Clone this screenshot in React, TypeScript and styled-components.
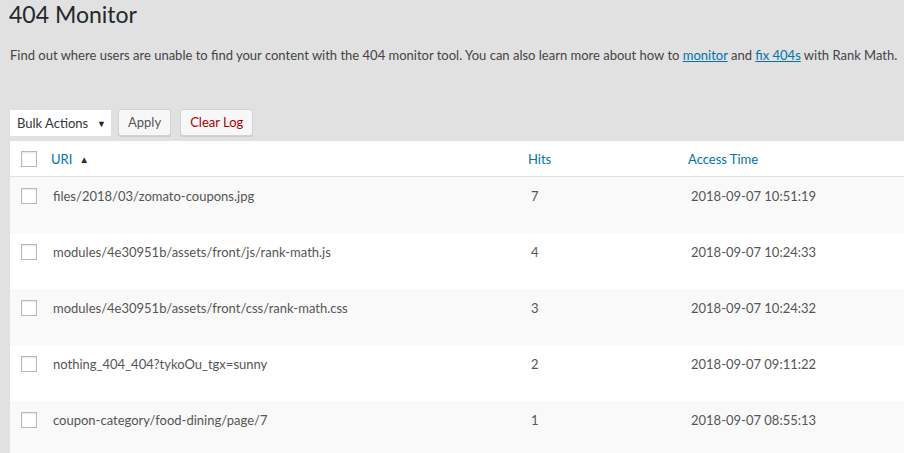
import React from "react";
import styled, { createGlobalStyle } from "styled-components";

const GlobalStyle = createGlobalStyle`
  html, body {
    margin: 0;
    padding: 0;
    background: #e1e1e1;
    font-family: Lato, "Open Sans", "Liberation Sans", sans-serif;
    color: #444;
    overflow: hidden;
  }
`;

const Page = styled.div`
  width: 904px;
  height: 453px;
  padding-left: 10px;
  box-sizing: border-box;
`;

const Title = styled.h1`
  margin: 0;
  padding: 0;
  font-size: 23px;
  font-weight: 400;
  line-height: 29px;
  color: #23282d;
  margin-left: -1px;
`;

const Description = styled.p`
  margin: 16px 0 0 0;
  font-size: 13px;
  line-height: 20px;
  color: #444;
  white-space: nowrap;
`;

const Link = styled.a`
  color: #0073aa;
  text-decoration: underline;
`;

const Toolbar = styled.div`
  display: flex;
  align-items: center;
  gap: 7px;
  margin-top: 43px;
  height: 28px;
`;

const Select = styled.div`
  display: flex;
  align-items: center;
  justify-content: space-between;
  width: 101px;
  height: 26px;
  box-sizing: border-box;
  padding: 0 5px 0 7px;
  background: #fff;
  font-size: 13px;
  color: #32373c;
  margin-top: 2px;
`;

const Caret = styled.span`
  font-size: 9px;
  color: #222;
`;

const Button = styled.button<{ $danger?: boolean }>`
  height: 27px;
  padding: 0 9px;
  margin-left: ${(p) => (p.$danger ? "2px" : "0")};
  border: 1px solid #d2d2d2;
  border-radius: 3px;
  background: #f7f7f7;
  box-shadow: 0 1px 0 #ccc;
  font-family: inherit;
  font-size: 13px;
  color: ${(p) => (p.$danger ? "#a00" : "#555")};
`;

const Table = styled.div`
  margin-top: 5px;
  background: #fff;
`;

const Row = styled.div<{ $alt?: boolean; $head?: boolean }>`
  display: grid;
  grid-template-columns: 41px 477px 160px 1fr;
  align-items: ${(p) => (p.$head ? "center" : "start")};
  height: ${(p) => (p.$head ? "36px" : "56px")};
  box-sizing: border-box;
  padding-top: ${(p) => (p.$head ? "0" : "9px")};
  background: ${(p) => (p.$alt ? "#f9f9f9" : "#fff")};
  border-bottom: ${(p) => (p.$head ? "1px solid #e1e1e1" : "none")};
  font-size: 13px;
  color: #555;
`;

const Check = styled.span`
  display: block;
  width: 16px;
  height: 16px;
  box-sizing: border-box;
  border: 1px solid #b4b9be;
  background: #fff;
  box-shadow: inset 0 1px 2px rgba(0, 0, 0, 0.1);
  margin-left: 11px;
`;

const Cell = styled.span<{ $pad?: number }>`
  padding-left: ${(p) => p.$pad ?? 0}px;
  line-height: 20px;
  white-space: nowrap;
`;

const HeadLink = styled.span<{ $pad?: number }>`
  padding-left: ${(p) => p.$pad ?? 0}px;
  color: #0073aa;
  font-size: 13px;
  display: flex;
  align-items: center;
  gap: 7px;
`;

const Arrow = styled.span`
  font-size: 10px;
  color: #333;
`;

const rows = [
  ["files/2018/03/zomato-coupons.jpg", "7", "2018-09-07 10:51:19"],
  ["modules/4e30951b/assets/front/js/rank-math.js", "4", "2018-09-07 10:24:33"],
  ["modules/4e30951b/assets/front/css/rank-math.css", "3", "2018-09-07 10:24:32"],
  ["nothing_404_404?tykoOu_tgx=sunny", "2", "2018-09-07 09:11:22"],
  ["coupon-category/food-dining/page/7", "1", "2018-09-07 08:55:13"],
];

export default function App() {
  return (
    <Page>
      <GlobalStyle />
      <Title>404 Monitor</Title>
      <Description>
        Find out where users are unable to find your content with the 404
        monitor tool. You can also learn more about how to{" "}
        <Link href="#">monitor</Link> and <Link href="#">fix 404s</Link> with
        Rank Math.
      </Description>
      <Toolbar>
        <Select>
          Bulk Actions <Caret>▼</Caret>
        </Select>
        <Button>Apply</Button>
        <Button $danger>Clear Log</Button>
      </Toolbar>
      <Table>
        <Row $head>
          <Check />
          <HeadLink>
            URI <Arrow>▲</Arrow>
          </HeadLink>
          <HeadLink>Hits</HeadLink>
          <HeadLink>Access Time</HeadLink>
        </Row>
        {rows.map((r, i) => (
          <Row key={i} $alt={i % 2 === 0}>
            <Check style={{ marginTop: 2 }} />
            <Cell $pad={2}>{r[0]}</Cell>
            <Cell $pad={3}>{r[1]}</Cell>
            <Cell $pad={3}>{r[2]}</Cell>
          </Row>
        ))}
      </Table>
    </Page>
  );
}
